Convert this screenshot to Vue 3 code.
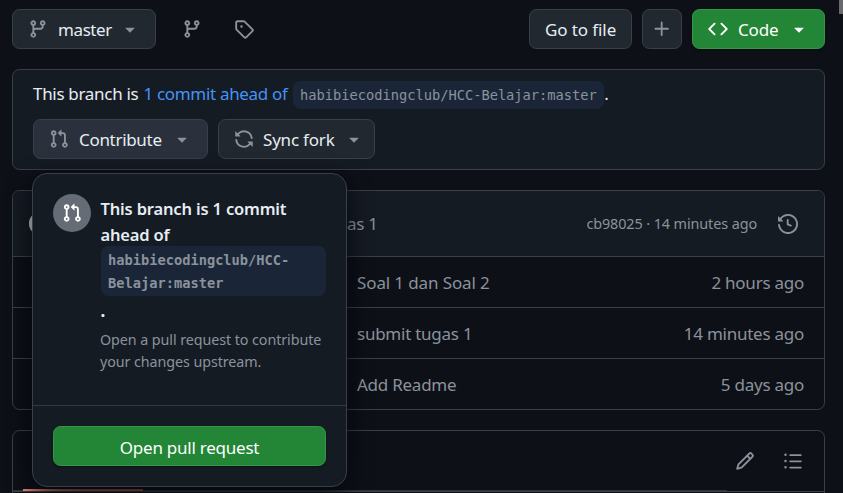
<script setup>
import { h } from 'vue'

const paths = {
  branch: 'M9.5 3.25a2.25 2.25 0 1 1 3 2.122V6A2.5 2.5 0 0 1 10 8.5H6a1 1 0 0 0-1 1v1.128a2.251 2.251 0 1 1-1.5 0V5.372a2.25 2.25 0 1 1 1.5 0v1.836A2.493 2.493 0 0 1 6 7h4a1 1 0 0 0 1-1v-.628A2.25 2.25 0 0 1 9.5 3.25Zm-6 0a.75.75 0 1 0 1.5 0 .75.75 0 0 0-1.5 0Zm8.25-.75a.75.75 0 1 0 0 1.5.75.75 0 0 0 0-1.5ZM4.25 12a.75.75 0 1 0 0 1.5.75.75 0 0 0 0-1.5Z',
  tag: 'M1 7.775V2.75C1 1.784 1.784 1 2.75 1h5.025c.464 0 .91.184 1.238.513l6.25 6.25a1.75 1.75 0 0 1 0 2.474l-5.026 5.026a1.75 1.75 0 0 1-2.474 0l-6.25-6.25A1.752 1.752 0 0 1 1 7.775Zm1.5 0c0 .066.026.13.073.177l6.25 6.25a.25.25 0 0 0 .354 0l5.025-5.025a.25.25 0 0 0 0-.354l-6.25-6.25a.25.25 0 0 0-.177-.073H2.75a.25.25 0 0 0-.25.25ZM6 5a1 1 0 1 1 0 2 1 1 0 0 1 0-2Z',
  plus: 'M7.75 2a.75.75 0 0 1 .75.75V7h4.25a.75.75 0 0 1 0 1.5H8.5v4.25a.75.75 0 0 1-1.5 0V8.5H2.75a.75.75 0 0 1 0-1.5H7V2.75A.75.75 0 0 1 7.75 2Z',
  code: 'm11.28 3.22 4.25 4.25a.75.75 0 0 1 0 1.06l-4.25 4.25a.749.749 0 0 1-1.275-.326.749.749 0 0 1 .215-.734L13.94 8l-3.72-3.72a.749.749 0 0 1 .326-1.275.749.749 0 0 1 .734.215Zm-6.56 0a.751.751 0 0 1 1.042.018.751.751 0 0 1 .018 1.042L2.06 8l3.72 3.72a.749.749 0 0 1-.326 1.275.749.749 0 0 1-.734-.215L.47 8.53a.75.75 0 0 1 0-1.06Z',
  caret: 'm4.427 7.427 3.396 3.396a.25.25 0 0 0 .354 0l3.396-3.396A.25.25 0 0 0 11.396 7H4.604a.25.25 0 0 0-.177.427Z',
  pull: 'M1.5 3.25a2.25 2.25 0 1 1 3 2.122v5.256a2.251 2.251 0 1 1-1.5 0V5.372A2.25 2.25 0 0 1 1.5 3.25Zm5.677-.177L9.573.677A.25.25 0 0 1 10 .854V2.5h1A2.5 2.5 0 0 1 13.5 5v5.628a2.251 2.251 0 1 1-1.5 0V5a1 1 0 0 0-1-1h-1v1.646a.25.25 0 0 1-.427.177L7.177 3.427a.25.25 0 0 1 0-.354ZM3.75 2.5a.75.75 0 1 0 0 1.5.75.75 0 0 0 0-1.5Zm0 9.5a.75.75 0 1 0 0 1.5.75.75 0 0 0 0-1.5Zm8.25.75a.75.75 0 1 0 1.5 0 .75.75 0 0 0-1.5 0Z',
  sync: 'M1.705 8.005a.75.75 0 0 1 .834.656 5.5 5.5 0 0 0 9.592 2.97l-1.204-1.204a.25.25 0 0 1 .177-.427h3.646a.25.25 0 0 1 .25.25v3.646a.25.25 0 0 1-.427.177l-1.38-1.38A7.002 7.002 0 0 1 1.05 8.84a.75.75 0 0 1 .656-.834ZM8 2.5a5.487 5.487 0 0 0-4.131 1.869l1.204 1.204A.25.25 0 0 1 4.896 6H1.25A.25.25 0 0 1 1 5.75V2.104a.25.25 0 0 1 .427-.177l1.38 1.38A7.002 7.002 0 0 1 14.95 7.16a.75.75 0 0 1-1.49.178A5.5 5.5 0 0 0 8 2.5Z',
  history: 'm.427 1.927 1.215 1.215a8.002 8.002 0 1 1-1.6 5.685.75.75 0 1 1 1.493-.154 6.5 6.5 0 1 0 1.18-4.458l1.358 1.358A.25.25 0 0 1 3.896 6H.25A.25.25 0 0 1 0 5.75V2.104a.25.25 0 0 1 .427-.177ZM7.75 4a.75.75 0 0 1 .75.75v2.992l2.028.812a.75.75 0 0 1-.557 1.392l-2.5-1A.751.751 0 0 1 7 8.25v-3.5A.75.75 0 0 1 7.75 4Z',
  pencil: 'M11.013 1.427a1.75 1.75 0 0 1 2.474 0l1.086 1.086a1.75 1.75 0 0 1 0 2.474l-8.61 8.61c-.21.21-.47.364-.756.445l-3.251.93a.75.75 0 0 1-.927-.928l.929-3.25c.081-.286.235-.547.445-.758l8.61-8.61Zm.176 4.823L9.75 4.81l-6.286 6.287a.253.253 0 0 0-.064.108l-.558 1.953 1.953-.558a.253.253 0 0 0 .108-.064Zm1.238-3.763a.25.25 0 0 0-.354 0L10.811 3.75l1.439 1.44 1.263-1.263a.25.25 0 0 0 0-.354Z',
  list: 'M5.75 2.5h8.5a.75.75 0 0 1 0 1.5h-8.5a.75.75 0 0 1 0-1.5Zm0 5h8.5a.75.75 0 0 1 0 1.5h-8.5a.75.75 0 0 1 0-1.5Zm0 5h8.5a.75.75 0 0 1 0 1.5h-8.5a.75.75 0 0 1 0-1.5ZM2 14a1 1 0 1 1 0-2 1 1 0 0 1 0 2Zm1-6a1 1 0 1 1-2 0 1 1 0 0 1 2 0ZM2 4a1 1 0 1 1 0-2 1 1 0 0 1 0 2Z',
}

const Icon = (props) =>
  h('svg', { viewBox: '0 0 16 16', width: 20, height: 20, fill: 'currentColor', 'aria-hidden': 'true' }, [
    h('path', { d: paths[props.name] }),
  ])
Icon.props = ['name']

const rows = [
  { message: 'Soal 1 dan Soal 2', age: '2 hours ago' },
  { message: 'submit tugas 1', age: '14 minutes ago' },
  { message: 'Add Readme', age: '5 days ago' },
]
</script>

<template>
  <main class="page">
    <header class="toolbar">
      <button class="btn branch"><Icon name="branch" class="icon" /><span>master</span><Icon name="caret" class="icon" /></button>
      <a class="ref-link"><Icon name="branch" class="icon" /></a>
      <a class="ref-link tags"><Icon name="tag" class="icon" /></a>
      <div class="actions">
        <button class="btn goto"><span>Go to file</span></button>
        <button class="btn add"><Icon name="plus" class="icon" /></button>
        <button class="btn primary code-btn"><Icon name="code" class="icon" /><span>Code</span><Icon name="caret" class="icon" /></button>
      </div>
    </header>

    <section class="panel status">
      <p class="status-text"><span>This branch is</span><a>1 commit ahead of</a><code class="ref">habibiecodingclub/HCC-Belajar:master</code><span>.</span></p>
      <div class="status-actions">
        <div class="menu-anchor">
          <button class="btn contribute"><Icon name="pull" class="icon" /><span>Contribute</span><Icon name="caret" class="icon" /></button>
          <div class="popover">
            <div class="pop-body">
              <span class="badge"><Icon name="pull" class="icon" /></span>
              <div class="pop-copy">
                <h2>This branch is 1 commit<br>ahead of</h2>
                <code class="ref ref-block">habibiecodingclub/HCC-<br>Belajar:master</code>
                <b class="dot">.</b>
                <p>Open a pull request to contribute<br>your changes upstream.</p>
              </div>
            </div>
            <div class="pop-foot">
              <button class="btn primary open"><span>Open pull request</span></button>
            </div>
          </div>
        </div>
        <button class="btn sync"><Icon name="sync" class="icon" /><span>Sync fork</span><Icon name="caret" class="icon" /></button>
      </div>
    </section>

    <section class="panel files">
      <div class="commit">
        <span class="avatar"></span>
        <span class="commit-msg">submit tugas 1</span>
        <span class="commit-meta">cb98025 · 14 minutes ago</span>
        <Icon name="history" class="icon history" />
      </div>
      <div v-for="row in rows" :key="row.message" class="row">
        <span>{{ row.message }}</span>
        <span class="age">{{ row.age }}</span>
      </div>
    </section>

    <section class="panel readme">
      <div class="readme-bar">
        <Icon name="pencil" class="icon" />
        <Icon name="list" class="icon" />
      </div>
      <div class="tab-line"><i class="lead"></i><i class="active"></i><i class="rest"></i></div>
    </section>
    <div class="scroll-thumb"></div>
  </main>
</template>

<style>
body { background: #0d1017; overflow: hidden; }
</style>

<style scoped>
* { box-sizing: border-box; }
.page {
  position: relative; width: 843px; height: 493px; overflow: hidden; padding: 9px 18px 0 12px;
  background: #0d1017; color: #e6edf3; white-space: nowrap;
  font: 17px/26px "Noto Sans", "Open Sans", sans-serif; letter-spacing: -0.2px;
}
.icon { flex: none; display: block; color: #8b929c; }
.btn {
  display: flex; align-items: center; height: 40px; margin: 0; padding: 0 15px;
  border: 1px solid #3a4048; border-radius: 7.5px; background: #212830; color: #e6edf3;
  font: inherit; letter-spacing: inherit;
}
.btn span { padding-top: 1px; }
.toolbar { display: flex; align-items: center; height: 40px; }
.branch { width: 144px; letter-spacing: -0.4px; }
.branch span { flex: 1; margin-left: 10px; text-align: left; }
.ref-link { margin-left: 26px; }
.tags { margin-left: 32px; }
.actions { display: flex; gap: 10px; margin-left: auto; }
.goto { width: 103px; letter-spacing: -0.1px; }
.add { width: 40px; padding: 0 9px; }
.primary { background: #238636; border-color: #379648; color: #fff; box-shadow: 0 1px 2px #01040980; }
.primary .icon { color: #fff; }
.code-btn { width: 133px; }
.code-btn span { flex: 1; margin-left: 10px; text-align: left; }
.panel { border: 1px solid #3a4048; border-radius: 7.5px; }
.status { height: 101px; margin-top: 20px; padding: 11px 20px 0; background: #151b23; letter-spacing: -0.31px; }
.status-text { display: flex; margin: 0; height: 28px; line-height: 26px; }
.status-text a { margin-left: 5px; color: #4493f8; }
.ref {
  height: 28px; margin-left: 5px; padding: 0 7.5px; border-radius: 7.5px; background: #1a2638;
  color: #8b929c; font: 13.7px/29px "DejaVu Sans Mono", monospace; letter-spacing: 0;
}
.status-actions { display: flex; gap: 10px; margin-top: 10px; }
.menu-anchor { position: relative; }
.contribute { width: 175px; background: #2a313c; }
.sync { width: 157px; padding-right: 10px; letter-spacing: -0.2px; }
.contribute span, .sync span { flex: 1; margin-left: 10px; text-align: left; }
.sync span { margin-left: 9px; }
.popover {
  position: absolute; z-index: 2; left: -1px; top: 54px; width: 315px; height: 314px;
  border: 1px solid #3a4048; border-radius: 15px; background: #151b23; box-shadow: 0 8px 24px #010409cc;
}
.pop-body { display: flex; gap: 9.5px; height: 232px; padding: 20px 20px 0; border-bottom: 1px solid #343a43; }
.badge { display: grid; place-items: center; flex: none; width: 38px; height: 38px; border-radius: 50%; background: #656c76; }
.badge .icon { color: #fff; }
.pop-copy { width: 225px; }
h2 { margin: 2px 0 0; font-size: 16.5px; line-height: 26px; font-weight: 600; letter-spacing: -0.17px; }
.ref-block { display: block; width: 225.5px; height: 50px; margin: -2px 0 0; padding: 3px 7.5px; line-height: 23px; font-weight: 700; }
.dot { display: block; height: 26px; margin-top: 2px; line-height: 26px; }
.pop-copy p { margin: 5px 0 0 -0.5px; color: #8b929c; font-size: 14.3px; line-height: 22px; letter-spacing: -0.07px; }
.pop-foot { padding: 20px; letter-spacing: -0.24px; }
.open { width: 273px; justify-content: center; }
.open span { padding-top: 3px; }
.files { height: 220px; margin-top: 20px; color: #8b929c; }
.commit { display: flex; align-items: center; height: 66px; padding: 0 26px 0 16px; border-radius: 7px 7px 0 0; background: #151b23; border-bottom: 1px solid #3a4048; }
.avatar { width: 25px; height: 25px; border-radius: 50%; background: #d0d4dc; }
.commit-msg { width: 112px; margin-left: 209px; letter-spacing: -0.3px; }
.commit-meta { margin-left: auto; font-size: 14.4px; letter-spacing: -0.1px; }
.history { margin-left: 21px; }
.row { display: flex; justify-content: space-between; height: 50px; padding: 0 20px 0 344px; line-height: 52px; letter-spacing: -0.25px; }
.row:nth-child(2) span:first-child { letter-spacing: -0.12px; }
.row + .row { height: 51px; border-top: 1px solid #3a4048; }
.readme { height: 80px; margin-top: 20px; border-radius: 7.5px 7.5px 0 0; }
.readme-bar { display: flex; justify-content: flex-end; gap: 28px; height: 58px; padding: 20px 21px 0 0; }
.tab-line { display: flex; height: 3px; border-bottom: 1px solid #3a4048; }
.active { width: 120px; height: 2px; background: linear-gradient(90deg, #f78166, #a5514b 50%); }
.lead, .rest { height: 1px; margin-top: 1px; background: #30343b; }
.lead { width: 10px; }
.rest { width: 584px; }
.scroll-thumb { position: absolute; right: 0; top: 0; width: 4px; height: 14px; background: #68696d; }
</style>
